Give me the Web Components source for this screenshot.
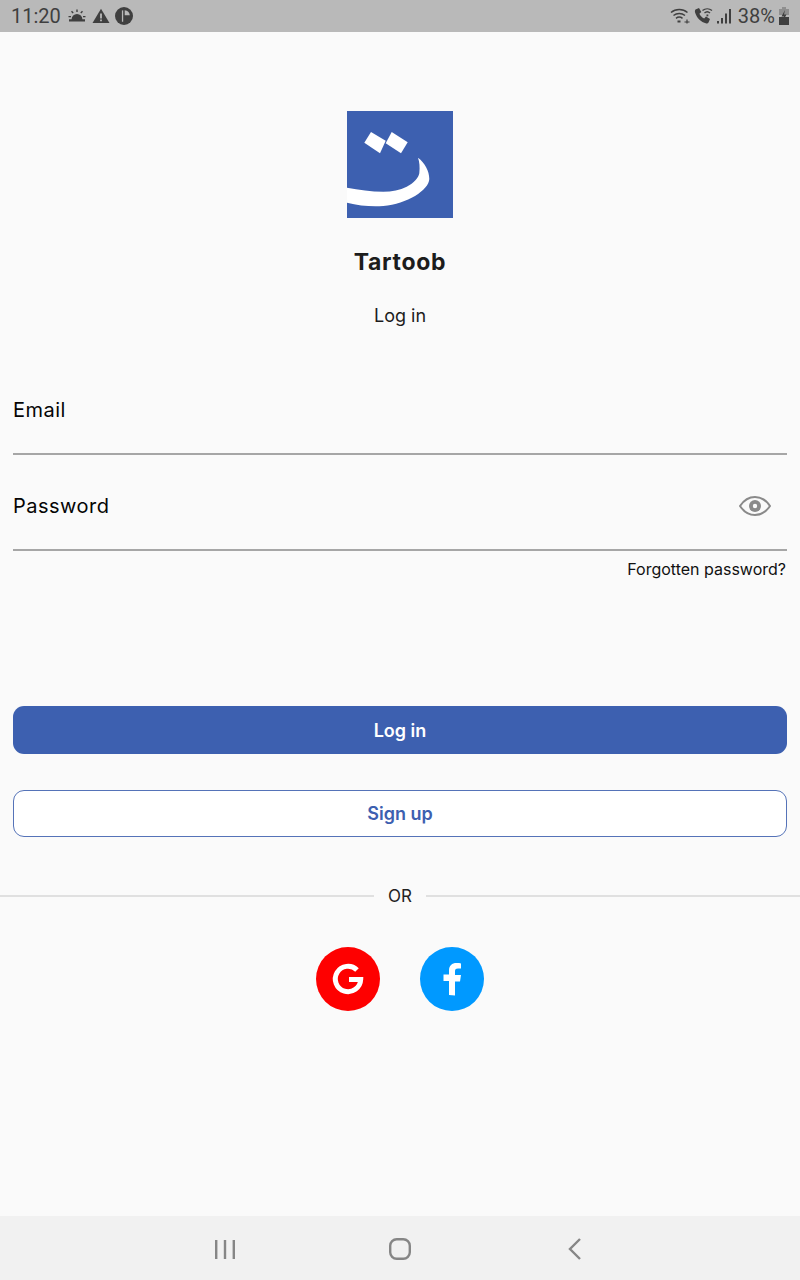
<!DOCTYPE html>
<html><head><meta charset="utf-8">
<style>
html,body{margin:0;padding:0;background:#fafafa;}
body{width:800px;height:1280px;overflow:hidden;font-family:Inter,Roboto,"Liberation Sans",sans-serif;}
</style></head>
<body>
<app-screen>
  <status-bar></status-bar>
  <main-area>
    <brand-header></brand-header>
    <text-field label="Email" style="margin-top:31px"></text-field>
    <text-field label="Password" eye></text-field>
    <forgot-link>Forgotten password?</forgot-link>
    <action-button kind="primary" style="margin-top:127px">Log in</action-button>
    <action-button kind="outline" style="margin-top:36px">Sign up</action-button>
    <or-divider></or-divider>
    <social-row></social-row>
  </main-area>
  <nav-bar></nav-bar>
</app-screen>
<script>
function def(name,html,init){
  customElements.define(name,class extends HTMLElement{
    constructor(){super();const r=this.attachShadow({mode:'open'});r.innerHTML=html;}
    connectedCallback(){if(init)init(this,this.shadowRoot);}
  });
}
def('app-screen',`<style>:host{display:flex;flex-direction:column;width:800px;height:1280px}</style><slot></slot>`);
def('main-area',`<style>:host{display:flex;flex-direction:column;flex:1;min-height:0;background:#fafafa}</style><slot></slot>`);
def('status-bar',`<style>
:host{display:flex;align-items:center;justify-content:space-between;height:32px;flex:none;background:#b9b9b9;color:#3f3f3f;font-family:Roboto,sans-serif;font-size:20px;padding:0 10px 0 11px;box-sizing:border-box}
.g{display:flex;align-items:center}
svg{display:block}
</style>
<div class="g"><span>11:20</span>
<svg style="margin-left:7px" width="18" height="16" viewBox="0 0 18 16" fill="#3f3f3f"><path d="M1 13.500h16v-2.200h-2.600a5.400 5.400 0 0 0-10.800 0H1z"/><path d="M8.300 1.500h1.400v2.600H8.300zM3 3.700l1-1 1.700 1.900-1 1zM15 3.700l-1-1-1.700 1.900 1 1zM.5 8H3v1.300H.5zM15 8h2.500v1.300H15z"/></svg>
<svg style="margin-left:6px" width="18" height="16" viewBox="0 0 18 16"><path fill="#3f3f3f" d="M9 .8 17.500 15H.5z"/><path fill="#b9b9b9" d="M8.100 5.500h1.800v5H8.100zM8.100 11.500h1.800v1.800H8.100z"/></svg>
<svg style="margin-left:5px" width="18" height="18" viewBox="0 0 18 18"><circle cx="9" cy="9" r="9" fill="#3f3f3f"/><path fill="#b9b9b9" d="M9.700 3.200a5.800 5.800 0 0 1 5.100 5.100H9.700zM8.200 3.200v11.600H6.900V3.500z"/></svg>
</div>
<div class="g">
<svg width="21" height="17" viewBox="0 0 21 17" fill="none" stroke="#3f3f3f" stroke-width="1.500"><path d="M1 4.500a12.500 12.500 0 0 1 16.500 0M3.500 7.500a9 9 0 0 1 11.500 0M6 10.300a5.200 5.200 0 0 1 6.500 0"/><path d="M7.500 13.500h3" stroke-width="2"/><path d="M14.500 14h5M17 11.500v4" stroke-width="1.200"/></svg>
<svg style="margin-left:3px" width="19" height="18" viewBox="0 0 19 18"><path fill="#3f3f3f" d="M1.500 2.500 5 1l2.300 4-1.900 1.700c.9 2 2.700 3.800 4.800 4.800L12 9.600l4 2.300-1.500 3.600c-.4.800-1.200 1.300-2.100 1C6.800 15.200 2.700 11 1 5.300c-.2-1 0-2.300.5-2.800z"/><path fill="none" stroke="#3f3f3f" stroke-width="1.300" d="M8.500 3.500a7.500 7.500 0 0 1 9.500 0M10.500 6a4 4 0 0 1 5.500 0"/><rect x="12.500" y="7.500" width="1.800" height="1.800" fill="#3f3f3f"/></svg>
<svg style="margin-left:4px" width="15" height="16" viewBox="0 0 15 16" fill="#3f3f3f"><rect x="0" y="13" width="2" height="2.500"/><rect x="4" y="10" width="2" height="5.500"/><rect x="8" y="5.500" width="2" height="10"/><rect x="12" y="1" width="2" height="14.500"/></svg>
<span style="margin-left:6px">38%</span>
<svg style="margin-left:3px" width="12" height="19" viewBox="0 0 11 19"><path fill="#8f8f8f" d="M3.500 0h4v2h3v6H.5V2h3z"/><path fill="#3f3f3f" d="M.5 10h10v8H.5z"/><path fill="#3f3f3f" d="M6.500 3 3 9.500h2.500L4.500 14 8 7.500H5.500z"/></svg>
</div>`);
def('brand-header',`<style>
:host{display:flex;flex-direction:column;align-items:center;padding-top:79px;color:#1c1c1c}
svg{display:block}
h1{margin:29px 0 0;font-size:23px;line-height:30px;font-weight:700;letter-spacing:.7px}
p{margin:27px 0 0;font-size:18px;line-height:24px;font-weight:400}
</style>
<svg width="106" height="107" viewBox="0 0 106 107"><rect width="106" height="107" fill="#3d60b0"/>
<path fill="#fff" d="M17.300 31.700 24 21 38.700 29.700 33 42.300z"/><path fill="#fff" d="M38.700 32.300 44.700 21 60.700 31.300 54 42.300z"/>
<path fill="#fff" d="M71 46.700C78 52 82.300 60 82.300 68 82 79 60 93 36.300 95 24 96 12 94.500 0 91.700V76.700C12 79 24 80.700 36.300 80.700 45 80.700 53 79 59.700 75.700 67 72 71.500 67 72.300 62.300 73 56 72.500 51 71 46.700z"/></svg>
<h1>Tartoob</h1><p>Log in</p>`);
def('text-field',`<style>
:host{display:block;padding:0 13px}
.b{height:96px;box-sizing:border-box;display:flex;align-items:center;justify-content:space-between;border-bottom:2px solid #a6a6a6;color:#050505;font-size:20px;letter-spacing:.5px;padding-top:15px}
.b span{display:block;margin-top:-8px}
svg{display:block;margin-right:16px;margin-top:-7px}
</style><div class="b"><span id="l"></span><svg id="e" width="32" height="22" viewBox="0 0 32 22"><path fill="none" stroke="#8a8a8a" stroke-width="2" d="M1 11C5 5 10 2 16 2s11 3 15 9c-4 6-9 9-15 9S5 17 1 11z"/><circle cx="16" cy="11" r="6" fill="#8a8a8a"/><circle cx="16" cy="11" r="2.200" fill="#fafafa"/></svg></div>`,
(el,r)=>{r.getElementById('l').textContent=el.getAttribute('label');if(!el.hasAttribute('eye'))r.getElementById('e').remove();});
def('forgot-link',`<style>:host{display:block;text-align:right;padding:8px 14px 0 0;font-size:16px;line-height:20px;color:#111}</style><slot></slot>`);
def('action-button',`<style>
:host{display:flex;align-items:center;justify-content:center;margin:0 13px;height:48px;border-radius:11px;box-sizing:border-box;font-size:18px;font-weight:600}
:host([kind=primary]){background:#3d60b0;color:#fff}
:host([kind=outline]){background:#fff;color:#3d60b0;border:1.5px solid #5573b8;height:47px}
</style><slot></slot>`);
def('or-divider',`<style>
:host{display:flex;align-items:center;margin-top:47px;height:24px;color:#222;font-size:17px}
i{flex:1;height:2px;background:#e0e0e0}span{padding:0 14px}
</style><i></i><span>OR</span><i></i>`);
def('social-row',`<style>
:host{display:flex;justify-content:center;gap:40px;margin-top:39px}
svg{display:block}
</style>
<svg width="64" height="64" viewBox="0 0 64 64"><circle cx="32" cy="32" r="32" fill="#fe0000"/><path fill="none" stroke="#fff" stroke-width="5" d="M41 23A12.700 12.700 0 1 0 44.700 32.500H33"/></svg>
<svg width="64" height="64" viewBox="0 0 64 64"><circle cx="32" cy="32" r="32" fill="#0099ff"/><path fill="#fff" d="M29 48V34h-5.500v-6.500H29V23.500c0-5 3-7.500 7.500-7.500 1.800 0 3.500.2 4.500.4v5.100h-3c-2.500 0-3 1.200-3 3v3.500h6l-1 6.500h-5v14z"/></svg>`);
def('nav-bar',`<style>
:host{display:flex;align-items:center;justify-content:center;height:64px;flex:none;background:#f1f1f1;padding-top:2px;box-sizing:border-box}
svg{display:block}
div{width:175px;display:flex;justify-content:center}
</style>
<div><svg width="20" height="20" viewBox="0 0 20 20" stroke="#868686" stroke-width="2.400" fill="none"><path d="M1.200 1v19M10 1v19M18.800 1v19"/></svg></div>
<div><svg width="22" height="22" viewBox="0 0 22 22" fill="none" stroke="#868686" stroke-width="2.400"><rect x="1.200" y="1.200" width="19.600" height="19.600" rx="6.500"/></svg></div>
<div><svg width="14" height="22" viewBox="0 0 14 22" fill="none" stroke="#868686" stroke-width="2.400"><path d="M12 1 2 11l10 10"/></svg></div>`);
</script>
</body></html>
